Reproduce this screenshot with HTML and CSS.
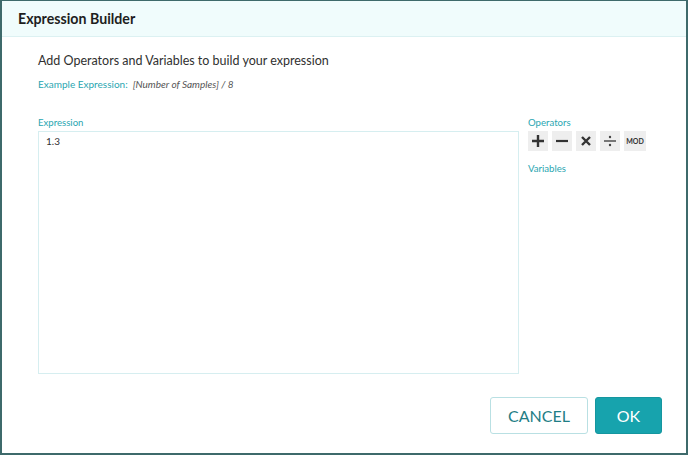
FILE: index.html
```html
<!DOCTYPE html>
<html>
<head>
<meta charset="utf-8">
<link rel="stylesheet" href="styles.css">
</head>
<body>
<div class="dialog">
  <div class="header"><span class="title">Expression Builder</span></div>
  <div class="body">
    <p class="intro">Add Operators and Variables to build your expression</p>
    <p class="example"><span class="ex-label">Example Expression:</span><span class="ex-value">[Number of Samples] / 8</span></p>
    <div class="main">
      <div class="expr-col">
        <div class="label">Expression</div>
        <div class="expr-box">1.3</div>
      </div>
      <div class="side-col">
        <div class="label">Operators</div>
        <div class="ops">
          <div class="op"><svg width="14" height="14" viewBox="0 0 14 14"><path d="M7 1v12M1 7h12" stroke="#333" stroke-width="2.4"/></svg></div>
          <div class="op"><svg width="14" height="14" viewBox="0 0 14 14"><path d="M1 7h12" stroke="#333" stroke-width="2.2"/></svg></div>
          <div class="op"><svg width="12" height="12" viewBox="0 0 12 12"><path d="M2 2l8 8M10 2l-8 8" stroke="#333" stroke-width="2.4"/></svg></div>
          <div class="op"><svg width="14" height="14" viewBox="0 0 14 14"><path d="M1 7h12" stroke="#444" stroke-width="1.4"/><circle cx="7" cy="3" r="1.2" fill="#444"/><circle cx="7" cy="11" r="1.2" fill="#444"/></svg></div>
          <div class="op mod">MOD</div>
        </div>
        <div class="label vars">Variables</div>
      </div>
    </div>
  </div>
  <div class="footer">
    <button class="btn cancel">CANCEL</button>
    <button class="btn ok">OK</button>
  </div>
</div>
</body>
</html>
```

FILE: styles.css
```css
html, body {
  margin: 0;
  padding: 0;
  background: #ffffff;
}
body {
  font-family: "Lato", "Noto Sans", sans-serif;
}
.dialog {
  box-sizing: border-box;
  width: 688px;
  height: 455px;
  border: 2px solid #3e6a6b;
  border-top-width: 1px;
  display: flex;
  flex-direction: column;
  background: #fff;
}
.header {
  height: 35px;
  background: #f0fcfc;
  border-bottom: 1px solid #dcf1f2;
  display: flex;
  align-items: center;
  padding-left: 16px;
}
.title {
  font-size: 14.2px;
  font-weight: 700;
  color: #1e1e1e;
}
.body {
  flex: 1;
  padding: 15px 0 0 36px;
  display: flex;
  flex-direction: column;
}
.intro {
  margin: 0;
  font-size: 12.5px;
  color: #303030;
  line-height: 18px;
}
.example {
  margin: 7px 0 0 0;
  font-size: 10px;
  line-height: 14px;
}
.ex-label {
  color: #2aa6b1;
  margin-right: 5px;
}
.ex-value {
  color: #555;
  font-style: italic;
}
.main {
  display: flex;
  margin-top: 25px;
}
.expr-col {
  width: 481px;
  display: flex;
  flex-direction: column;
}
.label {
  font-size: 9.6px;
  color: #2aa6b1;
  line-height: 13px;
}
.expr-box {
  box-sizing: border-box;
  height: 243px;
  margin-top: 2px;
  border: 1px solid #d6eef0;
  padding: 3px 7px;
  font-size: 10px;
  color: #333;
}
.side-col {
  margin-left: 9px;
  display: flex;
  flex-direction: column;
}
.ops {
  display: flex;
  gap: 4px;
  margin-top: 2px;
}
.op {
  width: 20px;
  height: 20px;
  background: #eeeeee;
  display: flex;
  align-items: center;
  justify-content: center;
}
.op.mod {
  width: 22px;
  font-size: 7px;
  font-weight: 700;
  color: #333;
}
.vars {
  margin-top: 11px;
}
.footer {
  display: flex;
  justify-content: flex-end;
  gap: 7px;
  padding: 0 24px 19px 0;
}
.btn {
  height: 37px;
  border-radius: 3px;
  font-family: "Lato", "Noto Sans", sans-serif;
  font-size: 16px;
  cursor: pointer;
}
.cancel {
  width: 98px;
  background: #fff;
  border: 1px solid #b9e0e3;
  color: #1f7e86;
}
.ok {
  width: 67px;
  background: #17a3ad;
  border: 1px solid #15969f;
  color: #fff;
}
```
